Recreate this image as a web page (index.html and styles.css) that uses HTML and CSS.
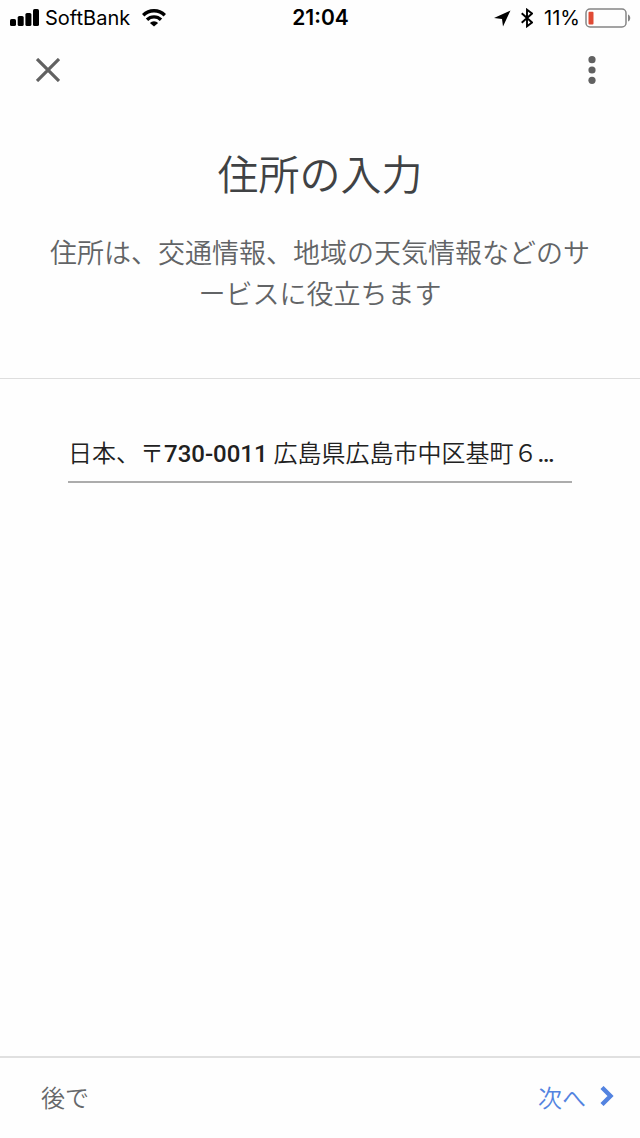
FILE: index.html
```html
<!DOCTYPE html>
<html lang="ja">
<head>
<meta charset="utf-8">
<meta name="viewport" content="width=device-width, initial-scale=1">
<title>住所の入力</title>
<link rel="stylesheet" href="styles.css">
</head>
<body>
<div class="screen">
  <div class="status">
    <div class="status-side">
      <svg class="signal" width="29" height="18" viewBox="0 0 29 18" aria-hidden="true"><rect x="0" y="10" width="6" height="7" rx="1.6"/><rect x="7.7" y="7" width="6" height="10" rx="1.6"/><rect x="15.4" y="4" width="6" height="13" rx="1.6"/><rect x="23" y="0" width="6" height="17" rx="1.6"/></svg>
      <span class="carrier">SoftBank</span>
      <svg class="wifi" width="24" height="18" viewBox="0 0 24 18" aria-hidden="true"><g fill="none" stroke="#000" stroke-width="3.4"><path d="M1.2 6.2a15.4 15.4 0 0 1 21.6 0"/><path d="M5 10.7a10 10 0 0 1 14 0"/></g><path d="M12 17.6 7.9 13.9a5.8 5.8 0 0 1 8.2 0z"/></svg>
    </div>
    <span class="clock">21:04</span>
    <div class="status-side status-end">
      <svg width="17" height="17" viewBox="0 0 17 17" aria-hidden="true"><path d="M16.5.5 0 8l8 1 1 7.5z"/></svg>
      <svg class="bluetooth" width="12" height="20" viewBox="0 0 12 20" aria-hidden="true"><path d="M.7 5.3 11 14.5 6 18.3V1.7l5 3.8L.7 14.7" fill="none" stroke="#000" stroke-width="1.9"/></svg>
      <span class="percent">11%</span>
      <svg class="battery" width="46" height="20" viewBox="0 0 46 20" aria-hidden="true"><rect x="1" y="1" width="40" height="18" rx="4" fill="none" stroke="#858585" stroke-width="1.5"/><rect x="3.5" y="3.7" width="5" height="12.8" rx="1" fill="#e04b35"/><path d="M43 6.5c3 1 3 6 0 7z" fill="#858585"/></svg>
    </div>
  </div>
  <header class="toolbar">
    <button class="icon-button" type="button" aria-label="閉じる"><svg width="24" height="24" viewBox="0 0 24 24"><path d="m1 1 22 22M23 1 1 23" fill="none" stroke="#616161" stroke-width="3.2"/></svg></button>
    <button class="icon-button" type="button" aria-label="メニュー"><svg width="8" height="28" viewBox="0 0 8 28" fill="#616161"><circle cx="4" cy="3.7" r="3.6"/><circle cx="4" cy="14" r="3.6"/><circle cx="4" cy="24.3" r="3.6"/></svg></button>
  </header>
  <section class="intro">
    <h1 class="title">住所の入力</h1>
    <p class="lead">住所は、交通情報、地域の天気情報などのサービスに役立ちます</p>
  </section>
  <main class="content">
    <input class="address" type="text" aria-label="住所" value="日本、〒730-0011 広島県広島市中区基町６…">
  </main>
  <footer class="actions">
    <button class="action" type="button">後で</button>
    <button class="action action-next" type="button">次へ<svg width="14" height="20" viewBox="0 0 14 20" aria-hidden="true"><path d="m2 1.5 8.5 8.5L2 18.5" fill="none" stroke="#5383e0" stroke-width="4.4"/></svg></button>
  </footer>
</div>
</body>
</html>
```
FILE: styles.css
```css
* {
  box-sizing: border-box;
}

body {
  margin: 0;
  background: #fefefe;
  color: #000;
  font-family: "Noto Sans CJK JP DemiLight", "Noto Sans CJK JP", sans-serif;
}

button {
  margin: 0;
  border: 0;
  background: none;
  font: inherit;
}

svg {
  display: block;
  flex: none;
}

.screen {
  display: flex;
  flex-direction: column;
  min-height: 100vh;
}

.status {
  display: flex;
  align-items: center;
  height: 36px;
  padding: 0 9px 0 10px;
  font: 20px/24px Inter, sans-serif;
}

.status-side {
  display: flex;
  flex: 1;
  align-items: center;
}

.status-end {
  justify-content: flex-end;
}

.carrier {
  margin: 0 12px 0 6px;
}

.clock {
  font-size: 21px;
  font-weight: 600;
}

.bluetooth {
  margin: 0 11px 0 10px;
}

.battery {
  margin-left: 5px;
}

.toolbar {
  display: flex;
  align-items: center;
  justify-content: space-between;
  height: 68px;
  padding: 0 24px;
}

.icon-button {
  display: grid;
  place-items: center;
  width: 48px;
  height: 48px;
  padding: 0;
}

.intro {
  padding: 36px 40px 65px;
  border-bottom: 1px solid #dedede;
  text-align: center;
}

.title {
  margin: 0 0 27px;
  color: #404244;
  font-size: 41px;
  font-weight: 350;
  line-height: 64px;
}

.lead {
  margin: 0;
  color: #626466;
  font-size: 27px;
  font-weight: 350;
  line-height: 41px;
}

.content {
  flex: 1;
  padding: 52px 68px;
}

.address {
  width: 100%;
  height: 52px;
  padding: 0 0 10px;
  border: 0;
  border-bottom: 2px solid #acacac;
  border-radius: 0;
  background: none;
  color: #212121;
  font-family: Roboto, "Noto Sans CJK JP DemiLight", "Noto Sans CJK JP", sans-serif;
  font-size: 24px;
  font-weight: 500;
  text-overflow: ellipsis;
}

.actions {
  display: flex;
  align-items: center;
  justify-content: space-between;
  height: 82px;
  padding: 0 26px 4px 41px;
  border-top: 2px solid #e0e0e0;
}

.action {
  display: flex;
  align-items: center;
  gap: 14px;
  padding: 8px 0;
  color: #66686a;
  font-size: 24px;
  font-weight: 350;
}

.action-next {
  color: #5383e0;
}
```
